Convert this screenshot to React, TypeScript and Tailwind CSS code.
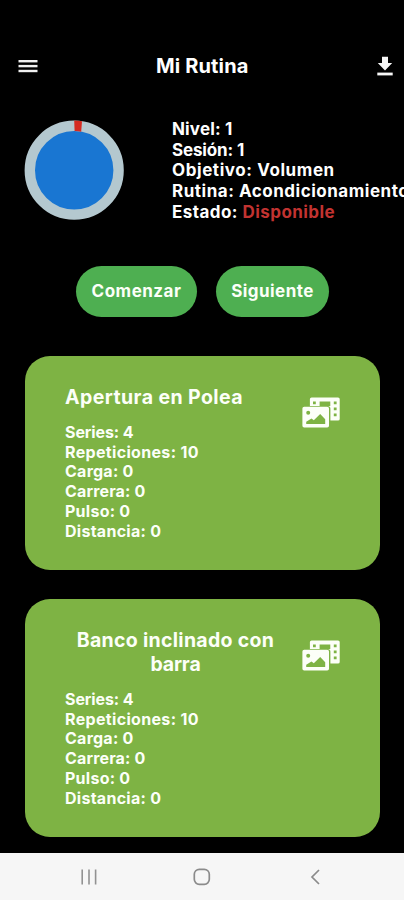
import React from "react";

const ICON_FILL = "#fcfff8";

function MenuIcon() {
  return (
    <svg className="h-[14px] w-[20px]" viewBox="0 0 20 14" fill="#f0f0f0">
      <rect x="0.5" y="1" width="19" height="2.4" />
      <rect x="0.5" y="5.9" width="19" height="2.4" />
      <rect x="0.5" y="10.8" width="19" height="2.4" />
    </svg>
  );
}

function DownloadIcon() {
  return (
    <svg className="h-[20px] w-[16px]" viewBox="0 0 16 20" fill="#f7f7f7">
      <path d="M5 0.7h6v6.2h4.2L8 14.4 0.8 6.9H5z" />
      <rect x="0.3" y="16.6" width="15.4" height="2.8" />
    </svg>
  );
}

function MediaIcon() {
  return (
    <svg className="h-[32px] w-[38px]" viewBox="0 0 38 32" fill={ICON_FILL}>
      <path
        fillRule="evenodd"
        d="M9.6 0.4H36a1.7 1.7 0 0 1 1.7 1.7v19.8A1.7 1.7 0 0 1 36 23.6h-7.6V11.8a2.8 2.8 0 0 0-2.8-2.8H7.9V2.1A1.7 1.7 0 0 1 9.6 0.4z M11 4.4v2.8h2.8V4.4z M17.6 4.4v4.6h10.7V4.4z M31.8 4.4v2.8h2.8V4.4z M31.8 10.4v2.8h2.8v-2.8z M31.8 16.4v2.8h2.8v-2.8z"
      />
      <path
        fillRule="evenodd"
        d="M2.2 9.8H25.2a1.8 1.8 0 0 1 1.8 1.8V28.8a1.8 1.8 0 0 1-1.8 1.8H2.2A1.8 1.8 0 0 1 .4 28.8V11.6a1.8 1.8 0 0 1 1.8-1.8z M6.2 13.7a2 2 0 1 0 0 4 2 2 0 0 0 0-4z M4.2 26.9H23.2V22.2l-5-5.2-6.4 6.2-2.3-1.8-5.3 3.4z"
      />
    </svg>
  );
}

type Line = { text: string; cls: string };

const stats: Line[] = [
  { text: "Series: 4", cls: "tracking-[-0.1px]" },
  { text: "Repeticiones: 10", cls: "tracking-[0.33px]" },
  { text: "Carga: 0", cls: "tracking-[0.25px]" },
  { text: "Carrera: 0", cls: "tracking-[0.15px]" },
  { text: "Pulso: 0", cls: "tracking-[0.25px]" },
  { text: "Distancia: 0", cls: "tracking-[0.27px]" },
];

function Card({ lines, className }: { lines: Line[]; className: string }) {
  return (
    <section className={`ml-[25px] mr-6 flex rounded-[25px] bg-[#7eb344] px-10 text-[#fcfff8] ${className}`}>
      <div className="min-w-0 flex-1 pt-[29px]">
        <h2 className="flex w-[221px] flex-col text-[19.5px] font-bold leading-[24px]">
          {lines.map((l) => (
            <span key={l.text} className={`whitespace-nowrap ${l.cls}`}>{l.text}</span>
          ))}
        </h2>
        <div className="mt-[14px] text-[16px] font-bold leading-[19.7px]">
          {stats.map((s) => (
            <p key={s.text} className="whitespace-nowrap">
              <span className={s.cls}>{s.text}</span>
            </p>
          ))}
        </div>
      </div>
      <div className="mt-[41px] shrink-0">
        <MediaIcon />
      </div>
    </section>
  );
}

export default function App() {
  return (
    <main className="flex h-[900px] w-[404px] flex-col overflow-hidden bg-black font-['Inter',sans-serif] text-white">
      <header className="mt-[46px] flex h-10 items-center pl-[18px] pr-[11px]">
        <div className="flex w-[138px]">
          <MenuIcon />
        </div>
        <h1 className="flex-1 whitespace-nowrap text-[20px] font-bold tracking-[0.15px]">Mi Rutina</h1>
        <DownloadIcon />
      </header>

      <div className="mt-[33px] flex h-[104px]">
        <svg className="ml-[24px] mt-px h-[102px] w-[102px] shrink-0" viewBox="0 0 102 102">
          <circle cx="50.2" cy="50.2" r="44.4" fill="#1976d2" stroke="#b4c8cf" strokeWidth="10.4" />
          <path d="M50.2 .6A49.6 49.6 0 0 1 58 1.2L57.2 11.7A39.2 39.2 0 0 0 50.6 11z" fill="#d52a20" />
        </svg>
        <div className="ml-[46px] text-[17px] font-bold leading-[20.7px]">
          <p className="whitespace-nowrap tracking-[0.15px]">Nivel: 1</p>
          <p className="whitespace-nowrap tracking-[-0.15px]">Sesión: 1</p>
          <p className="whitespace-nowrap tracking-[0.58px]">Objetivo: Volumen</p>
          <p className="whitespace-nowrap tracking-[0.52px]">Rutina: Acondicionamiento</p>
          <p className="whitespace-nowrap tracking-[0.45px]">Estado: <span className="text-[#c23331]">Disponible</span></p>
        </div>
      </div>

      <div className="mt-[43px] flex gap-[19px] pl-[76px] text-[17px] font-bold text-[#fcfff8]">
        <button className="h-[51px] w-[121px] rounded-full bg-[#4eaf51] tracking-[0.5px]">Comenzar</button>
        <button className="h-[51px] w-[113px] rounded-full bg-[#4eaf51] tracking-[0.45px]">Siguiente</button>
      </div>

      <Card className="mt-[39px] h-[214px]" lines={[{ text: "Apertura en Polea", cls: "tracking-[0.42px]" }]} />
      <Card
        className="mt-[29px] h-[238px]"
        lines={[
          { text: "Banco inclinado con", cls: "self-center tracking-[0.3px]" },
          { text: "barra", cls: "self-center tracking-[-0.15px]" },
        ]}
      />

      <nav className="mt-auto flex h-[47px] items-center bg-[#f6f6f6]">
        <svg className="ml-[81px] h-4 w-4" viewBox="0 0 16 16" stroke="#929292" strokeWidth="1.6">
          <path d="M1.2.5v15M8 .5v15M14.6.5v15" />
        </svg>
        <svg className="ml-[96px] h-[18px] w-[18px]" viewBox="0 0 18 18" fill="none" stroke="#8b8b8b" strokeWidth="1.7">
          <rect x="1.3" y="1.3" width="15" height="15" rx="5" />
        </svg>
        <svg className="ml-[99px] h-4 w-[11px]" viewBox="0 0 11 16" fill="none" stroke="#8b8b8b" strokeWidth="1.7">
          <path d="M9 1 2 8l7 7" />
        </svg>
      </nav>
    </main>
  );
}
